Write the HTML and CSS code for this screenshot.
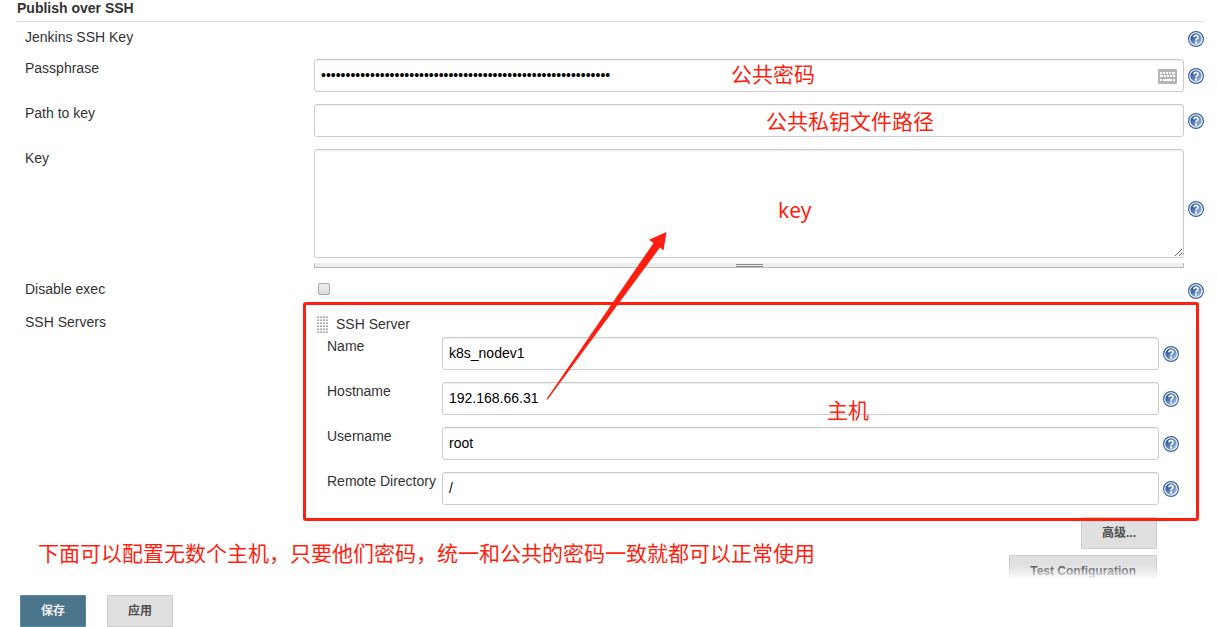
FILE: index.html
```html
<!DOCTYPE html>
<html lang="zh-CN">
<head>
<meta charset="utf-8">
<title>Publish over SSH</title>
<link rel="stylesheet" href="styles.css">
</head>
<body>
<svg class="defs" aria-hidden="true">
  <defs>
    <linearGradient id="help-fill" x1="0" y1="0" x2="1" y2="1">
      <stop offset="0.2" stop-color="#2a569a"/>
      <stop offset="1" stop-color="#b4cdf0"/>
    </linearGradient>
    <symbol id="help" viewBox="0 0 16 16">
      <circle cx="8" cy="8" r="7.4" fill="#fff" stroke="#3c659f" stroke-width="1.2"/>
      <circle cx="8" cy="8" r="5.7" fill="url(#help-fill)"/>
      <path d="M6 6.2C6 3.800 10 3.800 10 6.200C10 7.700 8 7.700 8 9.500" fill="none" stroke="#fff" stroke-width="1.6"/>
      <rect x="7" y="10.500" width="2" height="2" fill="#fff"/>
    </symbol>
  </defs>
</svg>
<main class="page">
  <h1 class="title">Publish over SSH</h1>
  <form class="form">
    <div class="row row-short">
      <span class="label">Jenkins SSH Key</span>
      <span></span>
      <button type="button" class="help" aria-label="Help: Jenkins SSH Key"><svg><use href="#help"/></svg></button>
    </div>
    <div class="row">
      <label class="label" for="pass">Passphrase</label>
      <div class="control">
        <input class="text" id="pass" type="password" value="12345678901234567890123456789012345678901234567890123456789">
        <svg class="keyboard" viewBox="0 0 19 15" aria-hidden="true">
          <rect width="19" height="15" rx="1" fill="#b5b5b5"/>
          <path d="M2 3h2v2h-2zM5 3h2v2h-2zM8 3h2v2h-2zM11 3h2v2h-2zM14 3h3v2h-3zM2 6h3v2h-3zM6 6h2v2h-2zM9 6h2v2h-2zM12 6h2v2h-2zM15 6h2v2h-2zM2 10h2v2h-2zM5 10h9v2h-9zM15 10h2v2h-2z" fill="#fff"/>
        </svg>
        <span class="note note-pass">公共密码</span>
      </div>
      <button type="button" class="help" aria-label="Help: Passphrase"><svg><use href="#help"/></svg></button>
    </div>
    <div class="row">
      <label class="label" for="path">Path to key</label>
      <div class="control">
        <input class="text" id="path" type="text">
        <span class="note note-path">公共私钥文件路径</span>
      </div>
      <button type="button" class="help" aria-label="Help: Path to key"><svg><use href="#help"/></svg></button>
    </div>
    <div class="row">
      <label class="label" for="key">Key</label>
      <div class="control">
        <textarea class="text area" id="key"></textarea>
        <div class="handle"><span class="handle-grip"></span></div>
        <span class="note note-key">key</span>
      </div>
      <button type="button" class="help" aria-label="Help: Key"><svg><use href="#help"/></svg></button>
    </div>
    <div class="row row-short">
      <label class="label" for="disable">Disable exec</label>
      <div class="control check"><input class="box" id="disable" type="checkbox"></div>
      <button type="button" class="help" aria-label="Help: Disable exec"><svg><use href="#help"/></svg></button>
    </div>
    <div class="row row-servers">
      <span class="label label-servers">SSH Servers</span>
      <div class="servers">
        <section class="server">
          <div class="server-head"><span class="grip"></span>SSH Server</div>
          <div class="fields">
            <div class="field">
              <label for="name">Name</label>
              <input class="text" id="name" type="text" value="k8s_nodev1">
              <button type="button" class="help" aria-label="Help: Name"><svg><use href="#help"/></svg></button>
            </div>
            <div class="field">
              <label for="host">Hostname</label>
              <input class="text" id="host" type="text" value="192.168.66.31">
              <button type="button" class="help" aria-label="Help: Hostname"><svg><use href="#help"/></svg></button>
            </div>
            <div class="field">
              <label for="user">Username</label>
              <input class="text" id="user" type="text" value="root">
              <button type="button" class="help" aria-label="Help: Username"><svg><use href="#help"/></svg></button>
            </div>
            <div class="field">
              <label for="dir">Remote Directory</label>
              <input class="text" id="dir" type="text" value="/">
              <button type="button" class="help" aria-label="Help: Remote Directory"><svg><use href="#help"/></svg></button>
            </div>
          </div>
          <div class="frame"></div>
          <span class="note note-host">主机</span>
          <svg class="arrow" viewBox="0 0 122 170" aria-hidden="true">
            <path d="M1.500 169L108.500 13L104 9.700L121.500 2L118.500 20.500L115 17.500L2.500 169.700Z" fill="#ff1f10"/>
          </svg>
        </section>
        <div class="actions">
          <button type="button" class="btn">高级...</button>
          <button type="button" class="btn">Test Configuration</button>
        </div>
      </div>
    </div>
  </form>
  <p class="note note-summary">下面可以配置无数个主机，只要他们密码，统一和公共的密码一致就都可以正常使用</p>
</main>
<footer class="footer">
  <button type="button" class="btn btn-primary">保存</button>
  <button type="button" class="btn">应用</button>
</footer>
</body>
</html>
```
FILE: styles.css
```css
* {
  box-sizing: border-box;
}

body {
  margin: 0;
  background: #fff;
  color: #333;
  font: 14px/18px "Liberation Sans", "Noto Sans CJK SC", sans-serif;
}

.defs {
  position: absolute;
  width: 0;
  height: 0;
}

.page {
  position: relative;
  padding: 0 13px 0 17px;
}

.title {
  margin: 0;
  padding-bottom: 5px;
  border-bottom: 1px solid #ddd;
  font-size: 14px;
  line-height: 16px;
}

.form {
  display: flex;
  flex-direction: column;
  gap: 12px;
  padding: 6px 0 0 8px;
}

.row {
  display: grid;
  grid-template-columns: 289px 1fr 16px;
  align-items: center;
}

.row > .control {
  margin-right: 4px;
}

.label,
.field label {
  align-self: start;
}

.row-short {
  min-height: 19px;
  align-items: end;
}

.control {
  position: relative;
}

.text {
  display: block;
  width: 100%;
  height: 33px;
  margin: 0;
  padding: 5px 6px 7px;
  border: 1px solid #ccc;
  border-radius: 3px;
  background: #fff;
  box-shadow: inset 0 1px 1px #eee;
  color: #000;
  font: inherit;
}

.area {
  height: 109px;
  resize: vertical;
}

.handle {
  display: flex;
  justify-content: center;
  height: 5px;
  margin-top: 5px;
  border: solid #bbb;
  border-width: 0 1px 1px;
  background: #eee;
}

.handle-grip {
  width: 27px;
  height: 3px;
  margin-top: 1px;
  border: solid #888;
  border-width: 1px 0;
}

.keyboard {
  position: absolute;
  top: 10px;
  right: 7px;
  width: 19px;
  height: 15px;
}

.help {
  width: 16px;
  height: 16px;
  padding: 0;
  border: 0;
  background: none;
}

.help svg {
  display: block;
  width: 16px;
  height: 16px;
}

.check {
  padding: 0 4px;
}

.box {
  display: block;
  appearance: none;
  width: 12px;
  height: 12px;
  margin: 0 0 4px;
  border: 1px solid #aaa;
  border-radius: 2px;
  background: linear-gradient(#eee, #ddd);
}

.row-servers {
  grid-template-columns: 289px 1fr;
}

.label-servers {
  padding-top: 2px;
}

.servers {
  padding-right: 25px;
}

.server {
  position: relative;
  padding-top: 4px;
}

.server-head {
  display: flex;
  align-items: center;
  gap: 7px;
  padding-left: 3px;
}

.grip {
  width: 12px;
  height: 18px;
  background:
    linear-gradient(90deg, transparent 2px, #fff 2px) 0 0 / 3px 3px,
    linear-gradient(#fff 1px, #ccc 1px, #ccc 2px, #aaa 2px) 0 0 / 3px 3px;
}

.fields {
  display: grid;
  gap: 12px;
  padding: 4px 0 0 13px;
}

.field {
  display: grid;
  grid-template-columns: 115px 1fr 20px;
  align-items: center;
}

.field .help {
  justify-self: end;
}

.frame {
  position: absolute;
  inset: -9px -20px -16px -11px;
  border: 3px solid #ff1f10;
  border-radius: 3px;
  pointer-events: none;
  z-index: 1;
}

.actions {
  display: flex;
  flex-direction: column;
  align-items: flex-end;
  gap: 6px;
  padding: 12px 22px 0 0;
}

.btn {
  height: 32px;
  padding: 0 20px;
  border: 1px solid #ccc;
  border-radius: 1px;
  background: #e0e0e0;
  color: #4d4d4d;
  font: bold 12px/18px "Liberation Sans", "Noto Sans CJK SC", sans-serif;
}

.btn-primary {
  border-color: #5788a1;
  background: #4b758b;
  color: #eee;
}

.footer {
  position: sticky;
  bottom: 0;
  display: flex;
  gap: 21px;
  margin-top: -22px;
  padding: 30px 20px 0;
  background: linear-gradient(transparent, #fff 15px);
}

.note {
  position: absolute;
  margin: 0;
  color: #ff1f10;
  font: 21px/28px "Noto Sans", "Noto Sans CJK SC", sans-serif;
  pointer-events: none;
  white-space: nowrap;
  z-index: 2;
}

.note-pass {
  top: 1px;
  left: 417px;
}

.note-path {
  top: 3px;
  left: 452px;
}

.note-key {
  top: 47px;
  left: 464px;
}

.note-host {
  top: 85px;
  left: 513px;
}

.note-summary {
  left: 38px;
  bottom: 20px;
}

.arrow {
  position: absolute;
  top: -81px;
  left: 231px;
  width: 122px;
  height: 170px;
  pointer-events: none;
  z-index: 2;
}
```
